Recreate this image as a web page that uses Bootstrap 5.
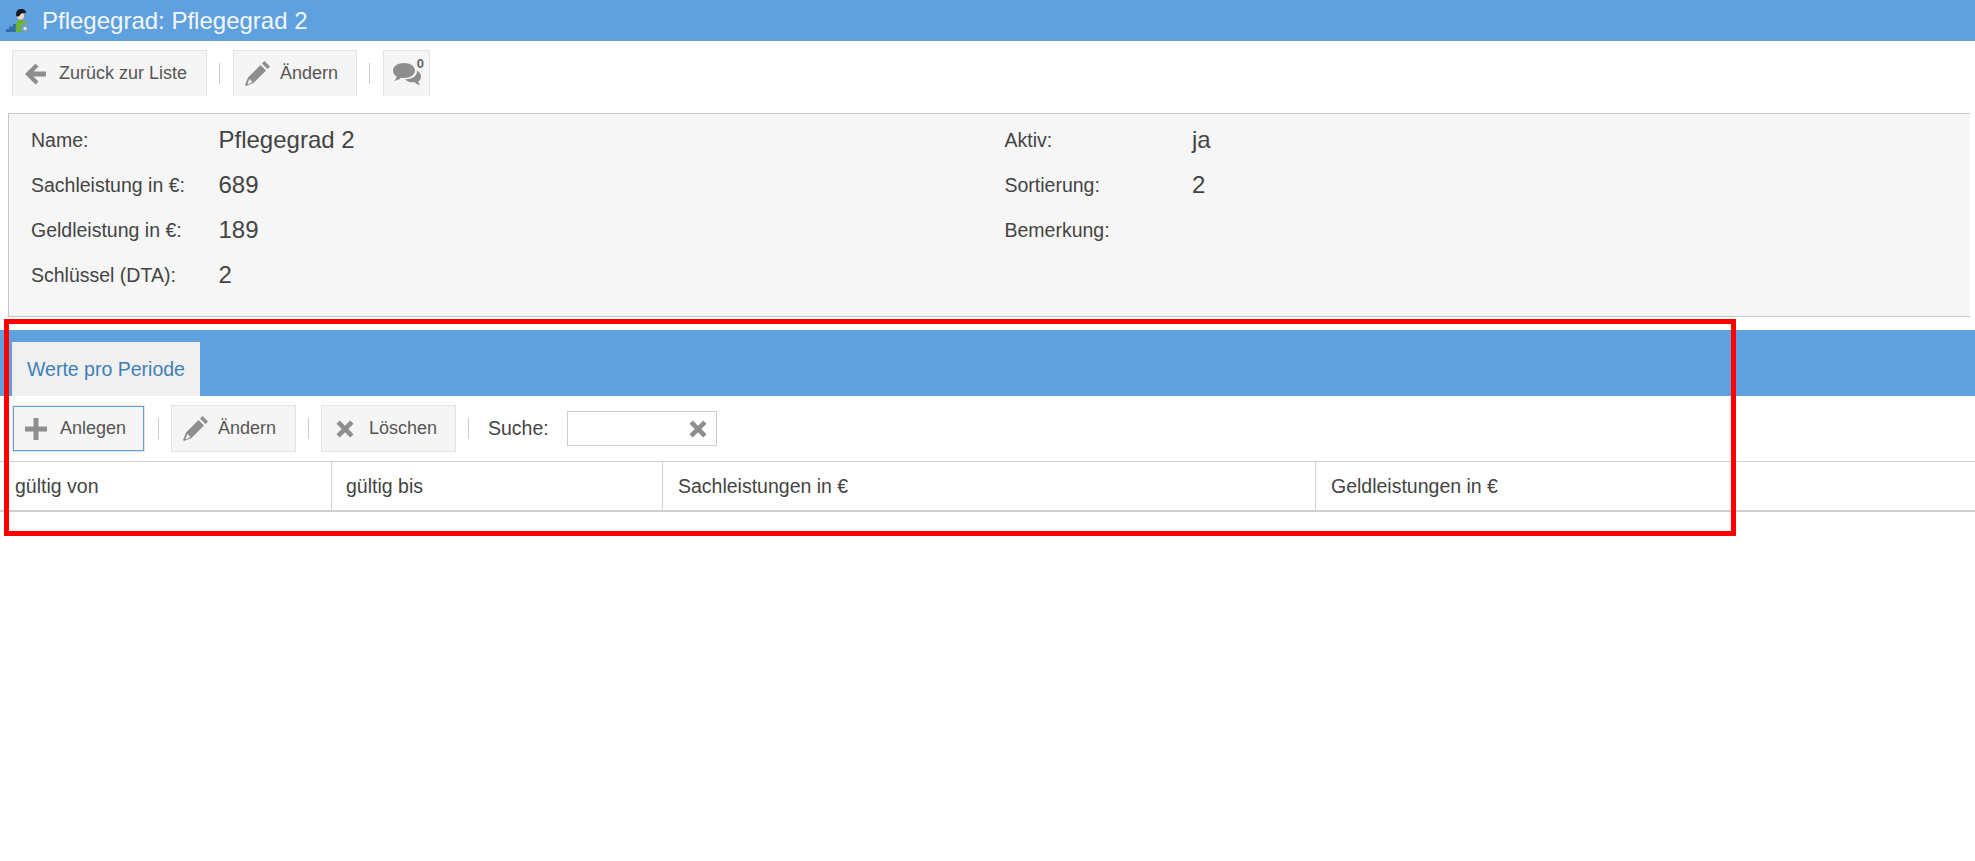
<!DOCTYPE html>
<html lang="de">
<head>
<meta charset="utf-8">
<title>Pflegegrad</title>
<link href="https://cdn.jsdelivr.net/npm/bootstrap@5.3.0/dist/css/bootstrap.min.css" rel="stylesheet">
<style>
html,body{height:100%;}
body{font-family:"Liberation Sans",Arial,sans-serif;color:#444;background:#fff;position:relative;overflow:hidden;}
.title-bar{height:41px;background:#5fa1de;color:#f2f7fc;font-size:24px;line-height:41px;padding-left:5px;gap:8px;}
.tool-row{padding-left:12px;}
.tool-top{height:55px;padding-top:9px;}
.tool-low{height:65px;padding-top:9px;padding-bottom:9px;}
.tool-btn{background:#f5f5f5;border:1px solid #e3e3e3;color:#555;font-size:18px;height:47px;padding:0;border-radius:0;display:flex;align-items:center;white-space:nowrap;}
.tool-top .tool-btn{height:46px;border-bottom:0;}
.tool-btn:hover{background:#f5f5f5;color:#555;border-color:#e3e3e3;}
.tool-btn svg{fill:#8e8e8e;flex:none;}
.tool-sep{width:1px;height:21px;background:#ccc;margin:0 12px;align-self:center;}
.tool-top .tool-sep{margin-right:13px;}
.btn-back{width:195px;}
.btn-edit{width:124px;}
.btn-edit-low{width:125px;}
.btn-chat{width:47px;position:relative;}
.btn-new{outline:1px solid #e3e3e3;border:1px solid #5fa1de;background:#f5f5f5;height:45px;margin:1px 2px 1px 1px;width:131px;}
.btn-del{width:135px;}
.chat-count{position:absolute;right:5px;top:6px;font-size:13px;font-weight:700;color:#666;line-height:14px;}
.ico-gap{margin-left:11px;margin-right:10px;}
.ico-arrow{margin-right:12px;}
.ico-plus{margin-left:11px;margin-right:13px;}
.ico-del{margin-left:14px;margin-right:15px;}
.info-panel{margin:17px 5px 0 8px;height:204px;background:#f6f6f6;border:solid #c8c8c8;border-width:1px 0 1px 1px;padding:4px 0 0 22px;}
.info-side{width:973.5px;flex:none;}
.info-pair{height:45px;align-items:center;}
.info-label{width:187.500px;font-size:19.5px;color:#444;flex:none;}
.info-value{font-size:24px;color:#444;padding-bottom:2px;}
.tab-strip{margin-top:13px;height:66px;background:#5fa1de;padding:12px 0 0 12px;}
.tab-item{background:#f0f0f0;color:#3e7fb8;font-size:19.5px;width:188px;height:54px;line-height:54px;text-align:center;}
.search-label{font-size:19.5px;margin-left:7px;margin-right:18px;color:#444;}
.search-box{width:150px;height:35px;border:1px solid #ccc;background:#fff;align-self:center;justify-content:flex-end;padding-right:9px;}
.search-box svg{fill:#8e8e8e;}
.data-head{border-top:1px solid #d0d0d0;border-bottom:2px solid #d0d0d0;height:51px;}
.data-cell{font-size:19.5px;line-height:48px;color:#444;border-right:1px solid #d0d0d0;flex:none;}
.cell-a{width:332px;padding-left:15px;}
.cell-b{width:331px;padding-left:14px;}
.cell-c{width:653px;padding-left:15px;}
.cell-d{flex:1;border-right:0;padding-left:15px;}
.red-frame{position:absolute;left:4px;top:319px;width:1732px;height:217px;border:5px solid #f00;pointer-events:none;}
</style>
</head>
<body>
<div class="title-bar d-flex">
  <svg width="29" height="33" viewBox="0 0 29 33" class="align-self-center" aria-hidden="true">
    <path d="M1 28v-3h3v-2.500h4v-2.500h5v8z" fill="#2f6ea6"/>
    <path d="M11 28c-1-5 0-10 3-12h4c3 1 5 4 5 7s-2 5-4 5z" fill="#6db52f"/>
    <circle cx="20" cy="24" r="4.500" fill="#6f9fc4"/><circle cx="20" cy="24.500" r="1.600" fill="#fff"/>
    <circle cx="15.500" cy="12" r="3.500" fill="#f0d8c0"/>
    <path d="M11 11c0-4 2-6 5-6 3 0 5 1 5 4-3 0-5 0-6 2-1 2-3 2-4 0z" fill="#15191c"/>
  </svg>
  <span>Pflegegrad: Pflegegrad 2</span>
</div>

<div class="tool-row tool-top d-flex">
  <button type="button" class="btn tool-btn btn-back">
    <svg class="ico-gap ico-arrow" width="23" height="24" viewBox="0 0 23 24"><path d="M11.500 1.500 1 12l10.500 10.500 3-3L9.500 14.500H22v-5H9.500l5-5z"/></svg>
    <span>Zurück zur Liste</span>
  </button>
  <span class="tool-sep"></span>
  <button type="button" class="btn tool-btn btn-edit">
    <svg class="ico-gap" width="25" height="25" viewBox="0 0 25 25"><path d="M19.500 0 25 5.500 22.500 8 17 2.500zM15.500 4 21 9.500 8.500 22 1 25 0 24l3-7.500zM4.500 18 2.500 22.500l.7.700L7.500 21z"/></svg>
    <span>Ändern</span>
  </button>
  <span class="tool-sep"></span>
  <button type="button" class="btn tool-btn btn-chat">
    <svg class="ms-2" width="30" height="26" viewBox="0 0 30 26"><path d="M12 2c6 0 11 3 11 7.500S18 17 12 17c-1 0-2 0-3-.2C7.500 18.500 5 19.500 2 20c1.500-1.200 2.500-2.800 2.500-4.500C2 14 1 12 1 9.500 1 5 6 2 12 2z"/><path d="M25 9.500c2.500 1.500 4 3.500 4 6 0 2-1 3.500-2.500 4.800 0 1.500.8 3 2 3.700-2.500-.3-4.500-1.200-6-2.800-4 .6-7.500-.6-9.500-3 7 .5 12.500-3.500 12-8.700z"/></svg>
    <span class="chat-count">0</span>
  </button>
</div>

<div class="info-panel">
  <div class="d-flex">
    <div class="info-side">
      <div class="info-pair d-flex"><span class="info-label">Name:</span><span class="info-value">Pflegegrad 2</span></div>
      <div class="info-pair d-flex"><span class="info-label">Sachleistung in €:</span><span class="info-value">689</span></div>
      <div class="info-pair d-flex"><span class="info-label">Geldleistung in €:</span><span class="info-value">189</span></div>
      <div class="info-pair d-flex"><span class="info-label">Schlüssel (DTA):</span><span class="info-value">2</span></div>
    </div>
    <div class="info-side">
      <div class="info-pair d-flex"><span class="info-label">Aktiv:</span><span class="info-value">ja</span></div>
      <div class="info-pair d-flex"><span class="info-label">Sortierung:</span><span class="info-value">2</span></div>
      <div class="info-pair d-flex"><span class="info-label">Bemerkung:</span><span class="info-value"></span></div>
    </div>
  </div>
</div>

<div class="tab-strip">
  <div class="tab-item">Werte pro Periode</div>
</div>

<div class="tool-row tool-low d-flex">
  <button type="button" class="btn tool-btn btn-new">
    <svg class="ico-plus" width="22" height="22" viewBox="0 0 22 22"><path d="M8.500 0h5v8.500H22v5h-8.500V22h-5v-8.500H0v-5h8.500z"/></svg>
    <span>Anlegen</span>
  </button>
  <span class="tool-sep"></span>
  <button type="button" class="btn tool-btn btn-edit-low">
    <svg class="ico-gap" width="25" height="25" viewBox="0 0 25 25"><path d="M19.500 0 25 5.500 22.500 8 17 2.500zM15.500 4 21 9.500 8.500 22 1 25 0 24l3-7.500zM4.500 18 2.500 22.500l.7.700L7.500 21z"/></svg>
    <span>Ändern</span>
  </button>
  <span class="tool-sep"></span>
  <button type="button" class="btn tool-btn btn-del">
    <svg class="ico-del" width="18" height="18" viewBox="0 0 19 19"><path d="M4 .5l5.500 5.500L15 .5 18.500 4 13 9.500l5.500 5.500-3.500 3.500L9.500 13 4 18.500.5 15 6 9.500.5 4z"/></svg>
    <span>Löschen</span>
  </button>
  <span class="tool-sep"></span>
  <span class="search-label align-self-center">Suche:</span>
  <div class="search-box d-flex align-items-center">
    <svg width="18" height="18" viewBox="0 0 19 19"><path d="M4 .5l5.500 5.500L15 .5 18.500 4 13 9.500l5.500 5.500-3.500 3.500L9.500 13 4 18.500.5 15 6 9.500.5 4z"/></svg>
  </div>
</div>

<div class="data-head d-flex">
  <div class="data-cell cell-a">gültig von</div>
  <div class="data-cell cell-b">gültig bis</div>
  <div class="data-cell cell-c">Sachleistungen in €</div>
  <div class="data-cell cell-d">Geldleistungen in €</div>
</div>

<div class="red-frame"></div>
<script src="https://cdn.jsdelivr.net/npm/bootstrap@5.3.0/dist/js/bootstrap.bundle.min.js"></script>
</body>
</html>
